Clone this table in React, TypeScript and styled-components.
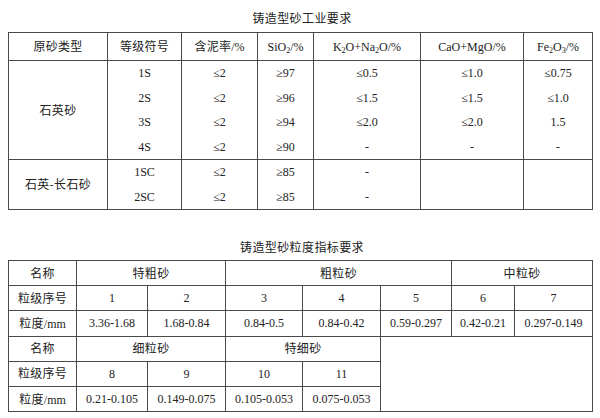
import React from 'react';
import styled, { createGlobalStyle } from 'styled-components';

const Global = createGlobalStyle`
  html, body { margin: 0; padding: 0; background: #fff; }
  body {
    font-family: "Liberation Serif", "Noto Sans CJK SC", serif;
    color: #222;
  }
`;

const Page = styled.div`
  width: 600px;
  box-sizing: border-box;
  padding: 11px 8px 0;
  display: flex;
  flex-direction: column;
`;

const Title = styled.div<{ $top?: number; $bottom?: number }>`
  font-family: "Noto Sans CJK SC", sans-serif;
  font-size: 12px;
  line-height: 14px;
  letter-spacing: 0.4px;
  text-align: center;
  padding-left: 4px;
  margin-top: ${(p) => p.$top ?? 0}px;
  margin-bottom: ${(p) => p.$bottom ?? 7}px;
`;

const Table = styled.table`
  width: 585px;
  border-collapse: collapse;
  table-layout: fixed;
  font-size: 12px;
`;

const Row = styled.tr<{ $h: number }>`
  height: ${(p) => p.$h}px;
`;

const Cell = styled.td`
  border: 1px solid #4a4a4a;
  text-align: center;
  vertical-align: middle;
  padding: 0;
  line-height: 14px;
  white-space: nowrap;
`;

const Label = styled.span`
  font-family: "Noto Sans CJK SC", sans-serif;
  letter-spacing: 0.3px;
`;

const Lines = styled.div`
  display: flex;
  flex-direction: column;
`;

const Line = styled.div`
  height: 24.5px;
  display: flex;
  align-items: center;
  justify-content: center;
`;

const Sub = styled.sub`
  font-size: 8px;
  line-height: 0;
  vertical-align: -2px;
`;

const t1Cols = [99, 74, 76, 56, 107, 103, 69];
const t2Cols = [68, 71, 78, 77, 78, 71, 63, 78];

type Group = { name: string; cols: string[][] };

const groups: Group[] = [
  {
    name: '石英砂',
    cols: [
      ['1S', '2S', '3S', '4S'],
      ['≤2', '≤2', '≤2', '≤2'],
      ['≥97', '≥96', '≥94', '≥90'],
      ['≤0.5', '≤1.5', '≤2.0', '-'],
      ['≤1.0', '≤1.5', '≤2.0', '-'],
      ['≤0.75', '≤1.0', '1.5', '-'],
    ],
  },
  {
    name: '石英-长石砂',
    cols: [
      ['1SC', '2SC'],
      ['≤2', '≤2'],
      ['≥85', '≥85'],
      ['-', '-'],
      [],
      [],
    ],
  },
];

const sizesTop = [
  '3.36-1.68',
  '1.68-0.84',
  '0.84-0.5',
  '0.84-0.42',
  '0.59-0.297',
  '0.42-0.21',
  '0.297-0.149',
];
const sizesBottom = ['0.21-0.105', '0.149-0.075', '0.105-0.053', '0.075-0.053'];

export default function App() {
  return (
    <>
      <Global />
      <Page>
        <Title>铸造型砂工业要求</Title>
        <Table>
          <colgroup>
            {t1Cols.map((w, i) => (
              <col key={i} style={{ width: w }} />
            ))}
          </colgroup>
          <tbody>
            <Row $h={28}>
              <Cell><Label>原砂类型</Label></Cell>
              <Cell><Label>等级符号</Label></Cell>
              <Cell><Label>含泥率</Label>/%</Cell>
              <Cell>SiO<Sub>2</Sub>/%</Cell>
              <Cell>K<Sub>2</Sub>O+Na<Sub>2</Sub>O/%</Cell>
              <Cell>CaO+MgO/%</Cell>
              <Cell>Fe<Sub>2</Sub>O<Sub>3</Sub>/%</Cell>
            </Row>
            {groups.map((g) => (
              <tr key={g.name}>
                <Cell><Label>{g.name}</Label></Cell>
                {g.cols.map((c, i) => (
                  <Cell key={i}>
                    <Lines>
                      {c.map((v, j) => (
                        <Line key={j}>{v}</Line>
                      ))}
                    </Lines>
                  </Cell>
                ))}
              </tr>
            ))}
          </tbody>
        </Table>

        <Title $top={30} $bottom={6}>铸造型砂粒度指标要求</Title>
        <Table>
          <colgroup>
            {t2Cols.map((w, i) => (
              <col key={i} style={{ width: w }} />
            ))}
          </colgroup>
          <tbody>
            <Row $h={25.2}>
              <Cell><Label>名称</Label></Cell>
              <Cell colSpan={2}><Label>特粗砂</Label></Cell>
              <Cell colSpan={3}><Label>粗粒砂</Label></Cell>
              <Cell colSpan={2}><Label>中粒砂</Label></Cell>
            </Row>
            <Row $h={25.2}>
              <Cell><Label>粒级序号</Label></Cell>
              {[1, 2, 3, 4, 5, 6, 7].map((n) => (
                <Cell key={n}>{n}</Cell>
              ))}
            </Row>
            <Row $h={25.2}>
              <Cell><Label>粒度</Label>/mm</Cell>
              {sizesTop.map((s) => (
                <Cell key={s}>{s}</Cell>
              ))}
            </Row>
            <Row $h={25.2}>
              <Cell><Label>名称</Label></Cell>
              <Cell colSpan={2}><Label>细粒砂</Label></Cell>
              <Cell colSpan={2}><Label>特细砂</Label></Cell>
              <Cell colSpan={3} rowSpan={3} />
            </Row>
            <Row $h={25.2}>
              <Cell><Label>粒级序号</Label></Cell>
              {[8, 9, 10, 11].map((n) => (
                <Cell key={n}>{n}</Cell>
              ))}
            </Row>
            <Row $h={25.2}>
              <Cell><Label>粒度</Label>/mm</Cell>
              {sizesBottom.map((s) => (
                <Cell key={s}>{s}</Cell>
              ))}
            </Row>
          </tbody>
        </Table>
      </Page>
    </>
  );
}
